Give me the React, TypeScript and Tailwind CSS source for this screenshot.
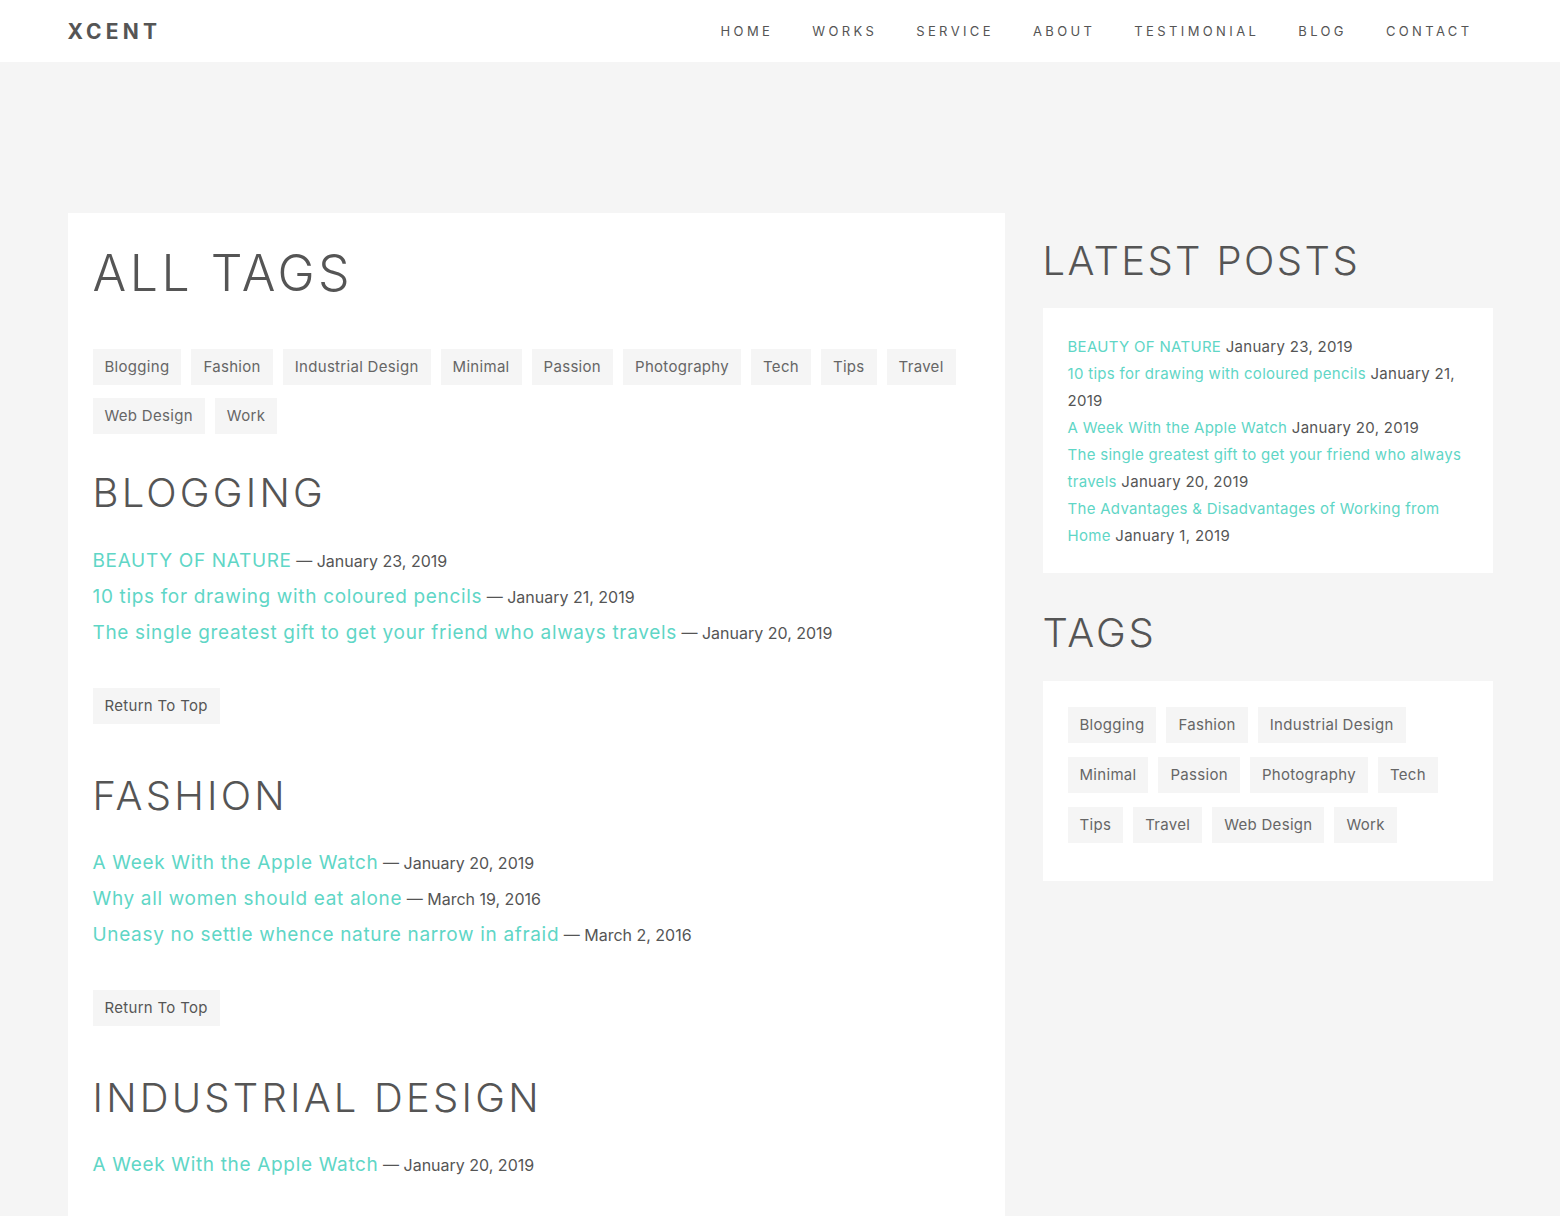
import React from "react";

const font = { fontFamily: "Inter, 'Noto Sans', sans-serif" };

const navItems = ["HOME", "WORKS", "SERVICE", "ABOUT", "TESTIMONIAL", "BLOG", "CONTACT"];
const allTags = [
  "Blogging",
  "Fashion",
  "Industrial Design",
  "Minimal",
  "Passion",
  "Photography",
  "Tech",
  "Tips",
  "Travel",
  "Web Design",
  "Work",
];

const sections = [
  {
    title: "BLOGGING",
    posts: [
      ["BEAUTY OF NATURE", "January 23, 2019"],
      ["10 tips for drawing with coloured pencils", "January 21, 2019"],
      ["The single greatest gift to get your friend who always travels", "January 20, 2019"],
    ],
  },
  {
    title: "FASHION",
    posts: [
      ["A Week With the Apple Watch", "January 20, 2019"],
      ["Why all women should eat alone", "March 19, 2016"],
      ["Uneasy no settle whence nature narrow in afraid", "March 2, 2016"],
    ],
  },
  {
    title: "INDUSTRIAL DESIGN",
    posts: [["A Week With the Apple Watch", "January 20, 2019"]],
  },
];

const latest = [
  ["BEAUTY OF NATURE", "January 23, 2019"],
  ["10 tips for drawing with coloured pencils", "January 21, 2019"],
  ["A Week With the Apple Watch", "January 20, 2019"],
  ["The single greatest gift to get your friend who always travels", "January 20, 2019"],
  ["The Advantages & Disadvantages of Working from Home", "January 1, 2019"],
];

const Tag = ({ label }: { label: string }) => (
  <span className="bg-[#f5f5f5] text-[#666] text-[15px] tracking-[0.02em] leading-[36px] h-[36px] px-3 inline-block">
    {label}
  </span>
);

const App = () => {
  return (
    <div className="min-h-[1216px] bg-[#f5f5f5] text-[#555]" style={font}>
      <header className="bg-white h-[62px]">
        <div className="w-[1425px] mx-auto h-full flex items-center justify-between pr-[20px] pt-[2px]">
          <a className="text-[21px] font-bold tracking-[0.2em] text-[#555]">XCENT</a>
          <nav className="flex gap-[39px]">
            {navItems.map((n) => (
              <a key={n} className="text-[13px] tracking-[0.26em] text-[#555]">
                {n}
              </a>
            ))}
          </nav>
        </div>
      </header>

      <div className="w-[1425px] mx-auto pt-[151px] flex gap-[38px] items-start">
        <main className="w-[937px] bg-white px-[25px] pt-[30px] pb-[60px]">
          <h1 className="text-[50px] leading-[1.2] font-light tracking-[0.07em] text-[#555]">
            ALL TAGS
          </h1>
          <div className="flex flex-wrap gap-x-[10px] gap-y-[13px] mt-[46px] w-[880px]">
            {allTags.map((t) => (
              <Tag key={t} label={t} />
            ))}
          </div>

          {sections.map((s, i) => (
            <section key={s.title} className={i === 0 ? "mt-[35px]" : "mt-[48px]"}>
              <h2 className="text-[40px] leading-[1.2] font-light tracking-[0.08em] text-[#555]">
                {s.title}
              </h2>
              <ul className={i === 0 ? "mt-[26px]" : "mt-[25px]"}>
                {s.posts.map(([title, date]) => (
                  <li key={title} className="leading-[36px]">
                    <a className="text-[19px] tracking-[0.035em] text-[#5fd6c6]">{title}</a>
                    <span className="text-[16px] text-[#555]"> — {date}</span>
                  </li>
                ))}
              </ul>
              {s.posts.length > 1 && (
                <button className="mt-[37px] bg-[#f5f5f5] text-[15px] tracking-[0.02em] text-[#555] h-[36px] px-3">
                  Return To Top
                </button>
              )}
            </section>
          ))}
        </main>

        <aside className="w-[450px]">
          <h3 className="text-[40px] leading-[1.2] font-light tracking-[0.06em] text-[#555] mt-[24px]">
            LATEST POSTS
          </h3>
          <div className="bg-white mt-[23px] px-[25px] pt-[25px] pb-[24px]">
            <ul className="text-[15px] leading-[27px] tracking-[0.02em] w-[400px]">
              {latest.map(([title, date]) => (
                <li key={title}>
                  <a className="text-[#5fd6c6]">{title}</a>{" "}
                  <span className="text-[#555]">{date}</span>
                </li>
              ))}
            </ul>
          </div>

          <h3 className="text-[40px] leading-[1.2] font-light tracking-[0.07em] text-[#555] mt-[36px]">
            TAGS
          </h3>
          <div className="bg-white mt-[24px] px-[25px] pt-[26px] pb-[38px]">
            <div className="flex flex-wrap gap-x-[10px] gap-y-[14px] w-[390px]">
              {allTags.map((t) => (
                <Tag key={t} label={t} />
              ))}
            </div>
          </div>
        </aside>
      </div>
    </div>
  );
};

export default App;
